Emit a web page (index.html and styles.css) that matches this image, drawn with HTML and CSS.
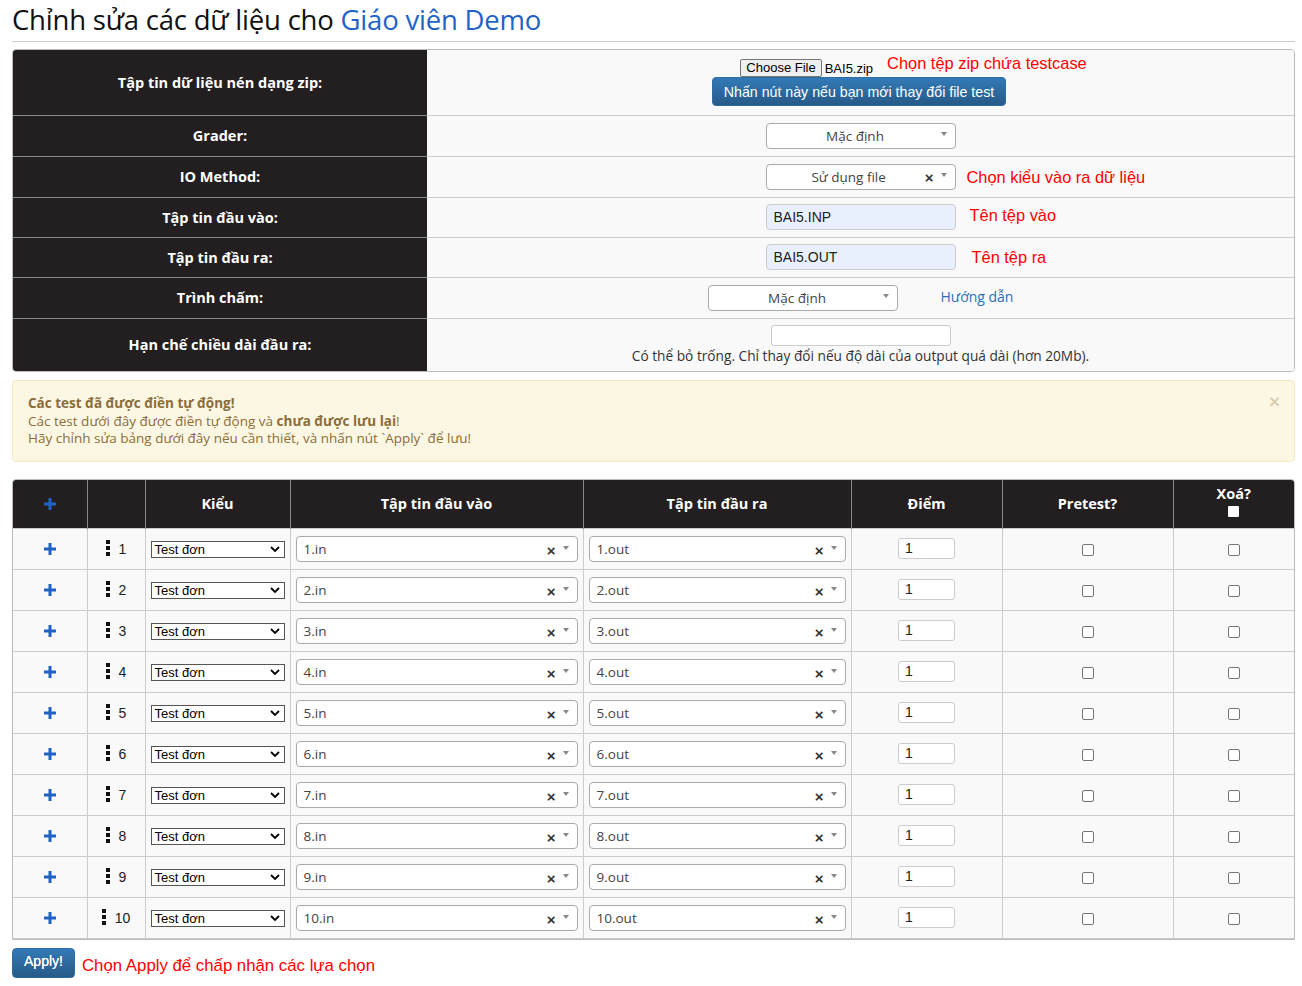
FILE: index.html
```html
<!DOCTYPE html>
<html lang="vi">
<head>
<meta charset="utf-8">
<title>Chỉnh sửa dữ liệu</title>
<link rel="stylesheet" href="styles.css">
</head>
<body>
<div class="page">
  <h1 class="title">Chỉnh sửa các dữ liệu cho <a class="title-link" href="#">Giáo viên Demo</a></h1>
  <hr class="rule">

  <div class="settings-wrap">
    <table class="settings">
      <tr class="r-zip">
        <th>Tập tin dữ liệu nén dạng zip:</th>
        <td>
          <div class="zip-line">
            <span class="file-btn">Choose File</span><span class="file-name">BAI5.zip</span>
            <span class="note note-zip">Chọn tệp zip chứa testcase</span>
          </div>
          <div class="zip-btn-line"><button class="btn-primary btn-update" type="button">Nhấn nút này nếu bạn mới thay đổi file test</button></div>
        </td>
      </tr>
      <tr class="r-41">
        <th>Grader:</th>
        <td>
          <div class="ctl-line">
            <div class="s2 s2-center"><span class="s2-text">Mặc định</span><span class="s2-arrow"></span></div>
          </div>
        </td>
      </tr>
      <tr class="r-41">
        <th>IO Method:</th>
        <td>
          <div class="ctl-line">
            <div class="s2 s2-center s2-clearable"><span class="s2-text">Sử dụng file</span><span class="s2-clear">×</span><span class="s2-arrow"></span></div>
            <span class="note note-io">Chọn kiểu vào ra dữ liệu</span>
          </div>
        </td>
      </tr>
      <tr class="r-40">
        <th>Tập tin đầu vào:</th>
        <td>
          <div class="ctl-line">
            <div class="text-input filled">BAI5.INP</div>
            <span class="note note-in">Tên tệp vào</span>
          </div>
        </td>
      </tr>
      <tr class="r-40">
        <th>Tập tin đầu ra:</th>
        <td>
          <div class="ctl-line">
            <div class="text-input filled">BAI5.OUT</div>
            <span class="note note-out">Tên tệp ra</span>
          </div>
        </td>
      </tr>
      <tr class="r-41">
        <th>Trình chấm:</th>
        <td>
          <div class="checker-line">
            <div class="s2 s2-center"><span class="s2-text">Mặc định</span><span class="s2-arrow"></span></div>
            <a class="guide-link" href="#">Hướng dẫn</a>
          </div>
        </td>
      </tr>
      <tr class="r-limit">
        <th>Hạn chế chiều dài đầu ra:</th>
        <td>
          <div class="limit-box">
            <div class="limit-input"></div>
            <div class="help-text">Có thể bỏ trống. Chỉ thay đổi nếu độ dài của output quá dài (hơn 20Mb).</div>
          </div>
        </td>
      </tr>
    </table>
  </div>

  <div class="alert">
    <span class="alert-close">×</span>
    <div class="alert-title">Các test đã được điền tự động!</div>
    <div>Các test dưới đây được điền tự động và <b>chưa được lưu lại</b>!</div>
    <div>Hãy chỉnh sửa bảng dưới đây nếu cần thiết, và nhấn nút `Apply` để lưu!</div>
  </div>

  <div class="tests-wrap">
    <table class="tests" id="tests">
      <colgroup>
        <col class="c-add"><col class="c-ord"><col class="c-type"><col class="c-in"><col class="c-out"><col class="c-pts"><col class="c-pre"><col class="c-del">
      </colgroup>
      <thead>
        <tr>
          <th><svg class="plus" viewBox="0 0 12 12" width="12" height="12"><rect x="4.5" y="0" width="3" height="12"/><rect x="0" y="4.5" width="12" height="3"/></svg></th>
          <th></th>
          <th>Kiểu</th>
          <th>Tập tin đầu vào</th>
          <th>Tập tin đầu ra</th>
          <th>Điểm</th>
          <th>Pretest?</th>
          <th class="th-del">Xoá?<span class="hdr-check"></span></th>
        </tr>
      </thead>
      <tbody id="tbody"></tbody>
    </table>
  </div>

  <div class="apply-line">
    <button class="btn-primary btn-apply" type="button">Apply!</button>
    <span class="note note-apply">Chọn Apply để chấp nhận các lựa chọn</span>
  </div>
</div>
<script src="app.js"></script>
</body>
</html>
```

FILE: app.js
```js
(function () {
  var tbody = document.getElementById('tbody');
  var html = '';
  for (var i = 1; i <= 10; i++) {
    html +=
      '<tr>' +
      '<td class="td-add"><svg class="plus" viewBox="0 0 12 12" width="12" height="12"><rect x="4.5" y="0" width="3" height="12"/><rect x="0" y="4.5" width="12" height="3"/></svg></td>' +
      '<td class="td-ord"><span class="ord-inner"><svg class="handle" viewBox="0 0 4 16" width="4" height="16"><rect x="0" y="0" width="4" height="4"/><rect x="0" y="6" width="4" height="4"/><rect x="0" y="12" width="4" height="4"/></svg><span class="ord-num">' + i + '</span></span></td>' +
      '<td class="td-type"><div class="native-select"><span>Test đơn</span><svg class="chev" viewBox="0 0 10 6" width="10" height="6"><path d="M1 1 L5 5 L9 1" fill="none" stroke="#000" stroke-width="1.8"/></svg></div></td>' +
      '<td class="td-file"><div class="s2 s2-left"><span class="s2-text">' + i + '.in</span><span class="s2-clear">×</span><span class="s2-arrow"></span></div></td>' +
      '<td class="td-file"><div class="s2 s2-left"><span class="s2-text">' + i + '.out</span><span class="s2-clear">×</span><span class="s2-arrow"></span></div></td>' +
      '<td class="td-pts"><div class="pts-input">1</div></td>' +
      '<td class="td-chk"><span class="check"></span></td>' +
      '<td class="td-chk"><span class="check"></span></td>' +
      '</tr>';
  }
  tbody.innerHTML = html;
})();
```

FILE: styles.css
```css
* { box-sizing: border-box; }
html, body { margin: 0; padding: 0; background: #fff; }
body {
  font-family: "Open Sans", "Noto Sans", sans-serif;
  color: #333;
  font-size: 14px;
}
.page {
  width: 1283px;
  margin-left: 12px;
}
.title {
  margin: 0;
  padding-top: 1px;
  font-weight: 400;
  font-size: 27.5px;
  line-height: 37px;
  color: #111;
  letter-spacing: -0.2px;
}
.title-link { color: #1f63c6; text-decoration: none; }
.rule {
  margin: 3px 0 0 0;
  border: 0;
  border-top: 1px solid #ccc;
  height: 0;
}

/* settings table */
.settings-wrap {
  margin-top: 7px;
  border: 1px solid #bbb;
  border-radius: 4px;
  overflow: hidden;
}
.settings {
  width: 100%;
  border-collapse: collapse;
}
.settings th {
  width: 414px;
  background: #231f20;
  color: #fff;
  font-weight: 700;
  font-size: 14.5px;
  text-align: center;
  border-top: 1px solid #888;
  padding: 0;
}
.settings td {
  background: #f9f9f9;
  border-top: 1px solid #ccc;
  padding: 0;
  vertical-align: middle;
}
.settings tr:first-child th, .settings tr:first-child td { border-top: 0; }
.r-zip { height: 65px; }
.r-41 { height: 41px; }
.r-40 { height: 40px; }
.r-limit { height: 53px; }

.zip-line {
  display: flex;
  justify-content: center;
  align-items: center;
  padding-left: 106px;
  height: 20px;
  margin-top: -2px;
}
.file-btn {
  font-family: "Liberation Sans", Arial, sans-serif;
  font-size: 13px;
  line-height: 16px;
  color: #000;
  background: #efefef;
  border: 1px solid #767676;
  border-radius: 2px;
  padding: 0 5px;
  margin-top: 3px;
}
.file-name {
  font-family: "Liberation Sans", Arial, sans-serif;
  font-size: 13px;
  color: #000;
  margin-left: 3px;
  margin-top: 5px;
}
.note {
  font-family: "Liberation Sans", Arial, sans-serif;
  color: #ff0000;
  font-size: 16.4px;
  white-space: nowrap;
}
.note-zip { margin-left: 14px; margin-bottom: 6px; }
.zip-btn-line { display: flex; justify-content: center; margin-top: 1px; }
.btn-primary {
  font-family: "Liberation Sans", Arial, sans-serif;
  color: #fff;
  border: 1px solid #2e6da4;
  border-radius: 4px;
  background: linear-gradient(to bottom, #337ab7 0%, #265a88 100%);
  cursor: pointer;
}
.btn-update {
  font-size: 14.2px;
  height: 29px;
  width: 294px;
  padding: 0;
  margin-left: -3px;
}

.ctl-line {
  display: grid;
  grid-template-columns: 1fr 190px 1fr;
  align-items: center;
}
.ctl-line > .s2, .ctl-line > .text-input { grid-column: 2; }
.ctl-line > .note { grid-column: 3; justify-self: start; }
.note-io { margin-left: 11px; margin-top: 1px; }
.note-in { margin-left: 14px; margin-top: -4px; }
.note-out { margin-left: 16px; }

/* select2-like */
.s2 {
  position: relative;
  height: 26px;
  background: #fff;
  border: 1px solid #aaa;
  border-radius: 4px;
  display: flex;
  align-items: center;
  font-size: 13.5px;
  color: #444;
}
.s2-center .s2-text {
  flex: 1;
  text-align: center;
  padding-left: 3px;
}
.s2-clearable .s2-text { padding-left: 6px; }
.s2-left .s2-text {
  flex: 1;
  padding-left: 7px;
  color: #444;
}
.s2-clear {
  font-family: "Liberation Sans", Arial, sans-serif;
  font-weight: 700;
  font-size: 15px;
  color: #333;
  margin-right: 7px;
  margin-top: 2px;
}
.s2-arrow {
  width: 0; height: 0;
  border-left: 3.5px solid transparent;
  border-right: 3.5px solid transparent;
  border-top: 4px solid #888;
  margin-right: 8px;
  margin-top: -3px;
}
.checker-line .s2 { width: 190px; }
.checker-line {
  display: flex;
  justify-content: center;
  align-items: center;
  gap: 43px;
}
.guide-link {
  color: #2a6ebb;
  text-decoration: none;
  font-size: 14px;
  margin-top: -3px;
}

.text-input {
  height: 26px;
  border: 1px solid #ccc;
  border-radius: 4px;
  padding-left: 7px;
  font-family: "Liberation Sans", Arial, sans-serif;
  font-size: 14px;
  line-height: 24px;
  color: #222;
  background: #fff;
}
.text-input.filled { background: #e8f0fe; }

.limit-box {
  display: flex;
  flex-direction: column;
  align-items: center;
  padding-top: 1px;
}
.limit-input {
  width: 180px;
  height: 21px;
  border: 1px solid #ccc;
  border-radius: 3px;
  background: #fff;
}
.help-text {
  font-size: 13.7px;
  color: #333;
  margin-top: 0;
  line-height: 19px;
}

/* alert */
.alert {
  position: relative;
  margin-top: 8px;
  height: 82px;
  background: #fcf7e3;
  border: 1px solid #f5e8c4;
  border-radius: 4px;
  color: #8a6d3b;
  font-size: 13.5px;
  line-height: 17.5px;
  padding: 14px 15px 0 15px;
}
.alert b, .alert-title { font-weight: 700; }
.alert-close {
  position: absolute;
  right: 14px;
  top: 12px;
  font-family: "Liberation Sans", Arial, sans-serif;
  font-weight: 700;
  font-size: 19px;
  color: #d9cfb3;
}

/* tests table */
.tests-wrap {
  margin-top: 17px;
  border: 1px solid #bbb;
  border-radius: 4px 4px 0 0;
  overflow: hidden;
}
.tests {
  width: 100%;
  border-collapse: collapse;
  table-layout: fixed;
}
.c-add { width: 74px; }
.c-ord { width: 58px; }
.c-type { width: 145px; }
.c-in { width: 293px; }
.c-out { width: 268px; }
.c-pts { width: 151px; }
.c-pre { width: 171px; }
.c-del { width: 121px; }
.tests thead th {
  height: 48px;
  background: #231f20;
  color: #fff;
  font-weight: 700;
  font-size: 14.5px;
  border-left: 1px solid #888;
  padding: 0;
  text-align: center;
  vertical-align: middle;
}
.tests thead th:first-child { border-left: 0; }
.th-del { line-height: 17px; padding-bottom: 5px !important; }
.hdr-check {
  display: block;
  width: 11px;
  height: 11px;
  background: #fff;
  margin: 4px auto 0;
  border-radius: 1px;
}
.tests tbody td {
  height: 41px;
  background: #f9f9f9;
  border: 1px solid #ccc;
  padding: 0 5px;
  vertical-align: middle;
}
.tests tbody tr:last-child td { border-bottom: 1px solid #ccc; }
.tests tbody td:first-child { border-left: 0; }
.tests tbody td:last-child { border-right: 0; }
.plus { fill: #2160c4; display: block; margin: 0 auto; }
.td-add .plus { margin-top: 0; }
.td-ord { text-align: center; }
.ord-inner {
  display: inline-flex;
  align-items: center;
  gap: 9px;
  margin-top: 1px;
}
.handle { fill: #111; display: block; }
.ord-num {
  font-family: "Liberation Sans", Arial, sans-serif;
  font-size: 14px;
  color: #222;
  margin-top: 2px;
}
.native-select {
  display: flex;
  align-items: center;
  justify-content: space-between;
  height: 17px;
  border: 1px solid #555;
  background: #fff;
  font-family: "Liberation Sans", Arial, sans-serif;
  font-size: 13px;
  color: #000;
  padding: 0 4px 0 3px;
  margin-top: 1px;
}
.chev { display: block; }
.td-file .s2 { margin-top: 1px; }
.td-pts { text-align: center; }
.pts-input {
  display: inline-block;
  width: 57px;
  height: 21px;
  border: 1px solid #ccc;
  border-radius: 3px;
  background: #fff;
  text-align: left;
  padding-left: 6px;
  font-family: "Liberation Sans", Arial, sans-serif;
  font-size: 14px;
  line-height: 19px;
  color: #222;
  margin-top: 0;
  vertical-align: middle;
}
.td-chk { text-align: center; }
.check {
  display: inline-block;
  width: 12px;
  height: 12px;
  border: 1px solid #767676;
  border-radius: 2px;
  background: #fff;
  vertical-align: middle;
  margin-top: 0;
}

.apply-line {
  display: flex;
  align-items: center;
  margin-top: 8px;
  gap: 7px;
}
.btn-apply {
  font-size: 14px;
  font-weight: 400;
  height: 30px;
  width: 63px;
  padding: 0 0 4px 0;
  text-shadow: 0 0 0.5px #fff;
}
.note-apply { font-size: 16.8px; margin-top: 7px; }
```
